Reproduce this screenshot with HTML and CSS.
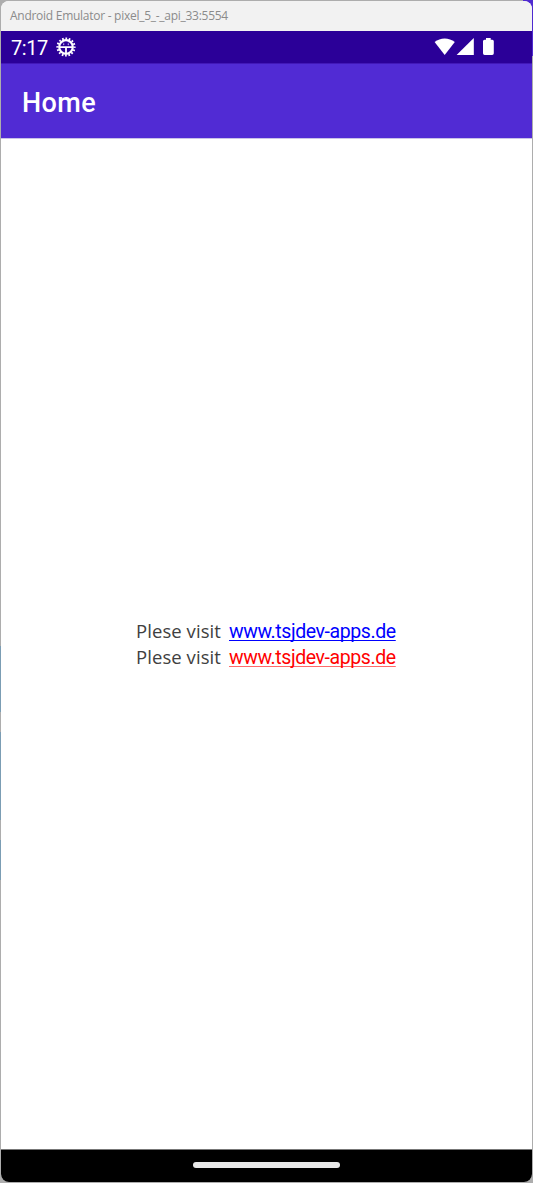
FILE: index.html
```html
<!DOCTYPE html>
<html lang="en">
<head>
<meta charset="utf-8">
<title>Android Emulator</title>
<link rel="stylesheet" href="styles.css">
</head>
<body>
<div class="window">
  <header class="titlebar"><span class="title-text">Android Emulator - pixel_5_-_api_33:5554</span></header>
  <div class="statusbar">
    <span class="clock">7:17</span>
    <svg class="gear" viewBox="0 0 20 20" width="20" height="20">
      <circle cx="10" cy="10" r="8.6" fill="none" stroke="#fff" stroke-width="2" stroke-dasharray="1.7 1.6775" stroke-dashoffset=".85"/>
      <circle cx="10" cy="10" r="6.8" fill="none" stroke="#fff" stroke-width="2.2"/>
      <path d="M3 10.2H17M10 10V17" stroke="#fff" stroke-width="1.8" fill="none"/>
      <path d="M7 5.5l1 1.4M13 5.5l-1 1.4" stroke="#cfc4ee" stroke-width=".7"/>
      <circle cx="7.7" cy="7.6" r=".7" fill="#cfc4ee"/><circle cx="12.3" cy="7.6" r=".7" fill="#cfc4ee"/>
    </svg>
    <svg class="signals" viewBox="0 0 62 20" width="62" height="20" fill="#fff">
      <path d="M.6 5.1C6.3.4 15 .4 20.8 5.1L10.7 17.9Z"/>
      <path d="M39.8 1V18H22.6Z"/>
      <path d="M52 1.1h4.7v1.7h1.6q1.5 0 1.5 1.5v12q0 1.6-1.6 1.6h-7.6q-1.6 0-1.6-1.6v-12q0-1.5 1.5-1.5H52Z"/>
    </svg>
  </div>
  <div class="appbar"><h1 class="heading">Home</h1></div>
  <main class="content">
    <div class="line"><span class="label">Plese visit</span><a class="link blue">www.tsjdev-apps.de</a></div>
    <div class="line"><span class="label">Plese visit</span><a class="link red">www.tsjdev-apps.de</a></div>
  </main>
  <footer class="navbar"><div class="handle"></div></footer>
</div>
</body>
</html>
```
FILE: styles.css
```css
* { box-sizing: border-box; }
body {
  margin: 0;
  width: 533px;
  height: 1183px;
  padding: 1px;
  overflow: hidden;
  background:
    linear-gradient(#4f2ad0, #4f2ad0) 100% 0 / 10px 56px no-repeat,
    linear-gradient(#7b9db4, #7b9db4) 0 646px / 1px 66px no-repeat,
    linear-gradient(#7b9db4, #7b9db4) 0 732px / 1px 88px no-repeat,
    linear-gradient(#7b9db4, #7b9db4) 0 840px / 1px 40px no-repeat,
    #adadad;
}
.window {
  width: 531px;
  height: 1181px;
  display: flex;
  flex-direction: column;
  border-radius: 8px;
  overflow: hidden;
  background: #fff;
}
.titlebar {
  height: 30px;
  padding-left: 9px;
  background: #f2f2f2;
  color: #8b8b8b;
  font: 12px/30px "Open Sans", "Noto Sans", sans-serif;
  letter-spacing: -0.27px;
  white-space: nowrap;
}
.statusbar {
  height: 32px;
  display: flex;
  align-items: center;
  padding: 0 36px 0 10px;
  background: #2b0098;
  color: #fff;
}
.clock {
  width: 37px;
  padding-top: 1px;
  font: 20px/32px Roboto, sans-serif;
  letter-spacing: -0.4px;
  white-space: nowrap;
}
.gear { margin-left: 8px; }
.signals { margin-left: auto; }
.appbar {
  height: 76px;
  padding: 1px 0 0 21px;
  background: #512bd4;
  border-top: 1px solid #4218b8;
  border-bottom: 1px solid #c9c2e8;
  color: #fff;
}
.heading { margin: 0; font: 500 27px/76px Roboto, sans-serif; letter-spacing: 0.4px; }
.content {
  flex: 1;
  display: flex;
  flex-direction: column;
  align-items: center;
  justify-content: center;
}
.line {
  display: flex;
  gap: 8px;
  height: 26px;
  margin-right: 1px;
  line-height: 26px;
  white-space: nowrap;
}
.label {
  width: 85px;
  font-family: "Open Sans", sans-serif;
  font-size: 18.5px;
  letter-spacing: 0.07px;
  color: #404040;
}
.link {
  width: 167px;
  padding-top: 1px;
  font-family: Roboto, sans-serif;
  font-size: 19.5px;
  letter-spacing: -0.41px;
  text-decoration: underline;
  text-decoration-thickness: 1px;
  text-decoration-skip-ink: none;
  text-underline-offset: 2px;
}
.blue { color: #0000ff; }
.red { color: #ff0000; text-decoration-color: #ff6a6a; }
.navbar {
  height: 33px;
  display: flex;
  align-items: center;
  justify-content: center;
  background: #000;
  border-top: 1px solid #777;
  padding: 0 1px 2px 0;
}
.handle { width: 147px; height: 6px; border-radius: 3px; background: #e8e8e8; }
```
